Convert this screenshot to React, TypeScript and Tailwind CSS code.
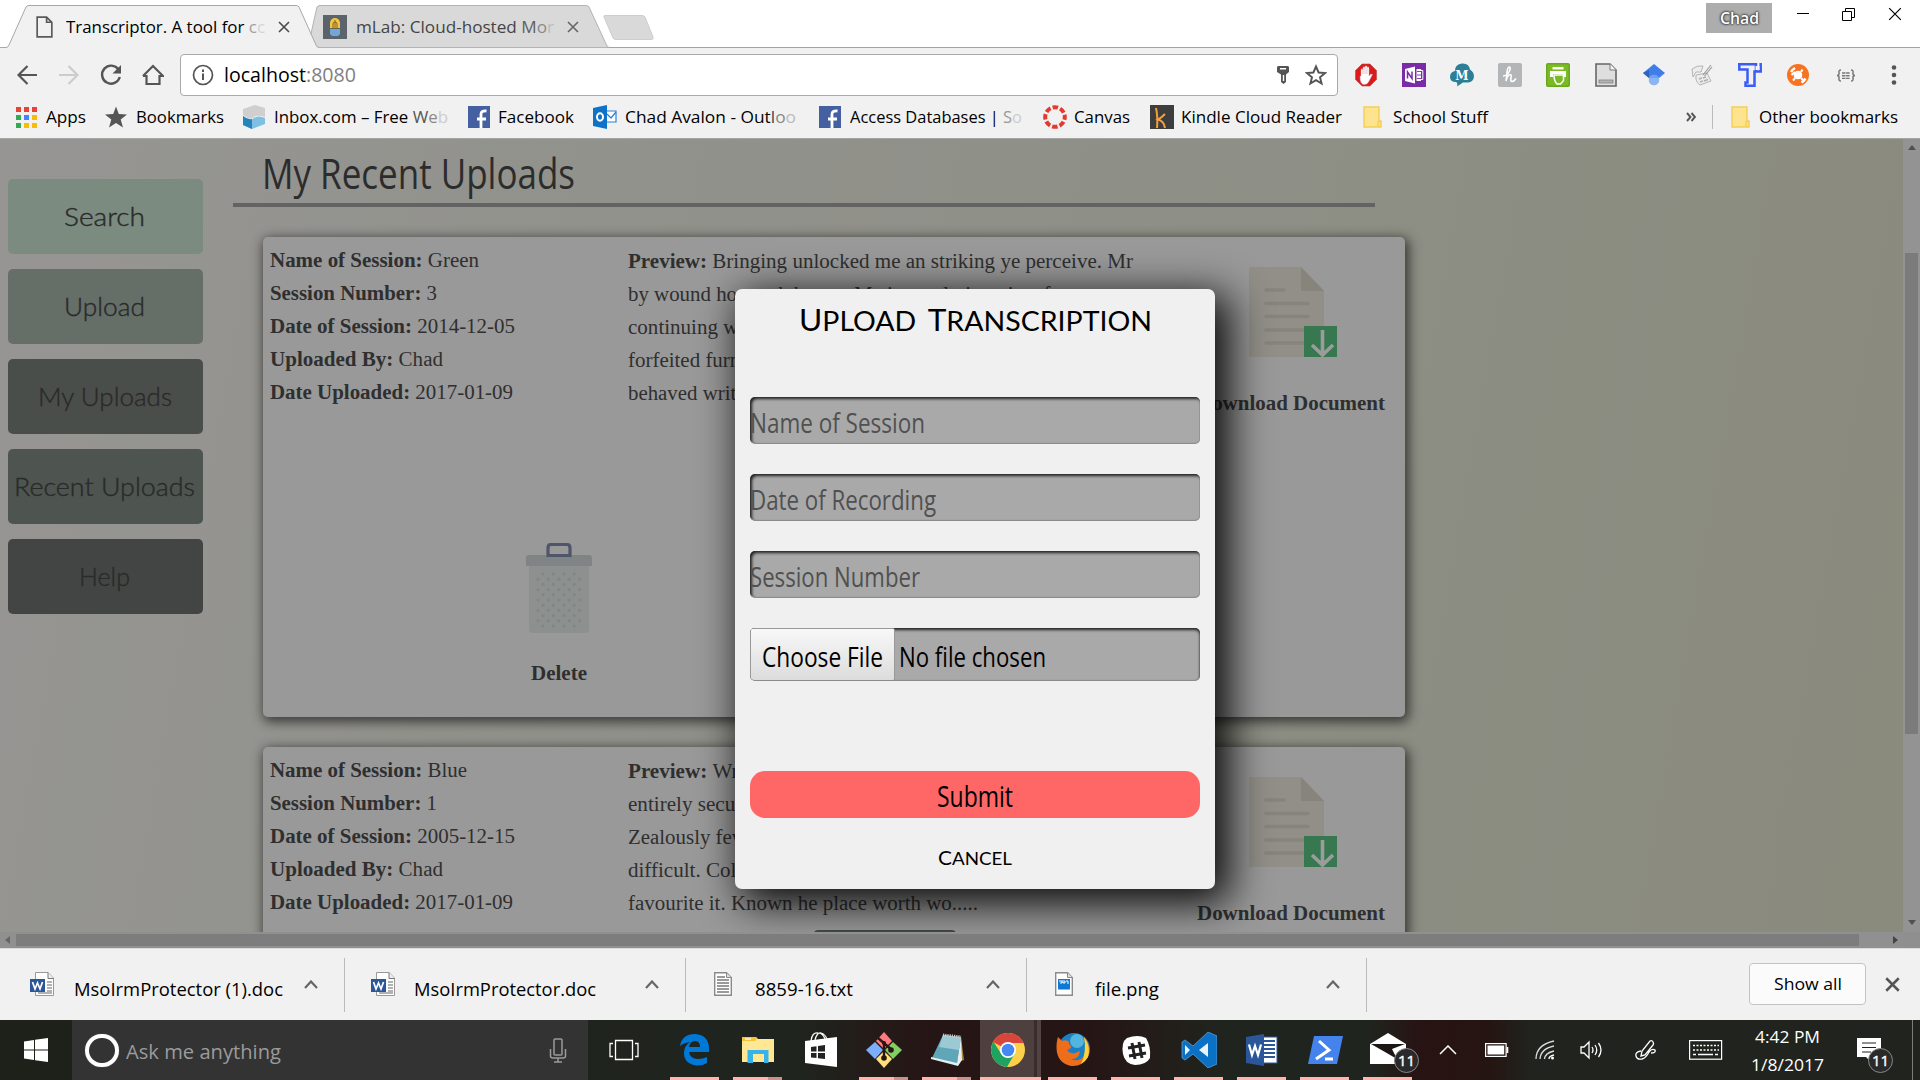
import React, { useLayoutEffect, useRef, useState } from "react";

type FitProps = { children: React.ReactNode; className?: string };

/* Single line of text stretched or condensed to the width of its box. */
function Fit({ children, className = "" }: FitProps) {
  const box = useRef<HTMLSpanElement>(null);
  const inner = useRef<HTMLSpanElement>(null);
  const [scale, setScale] = useState(1);
  useLayoutEffect(() => {
    if (box.current && inner.current && inner.current.offsetWidth > 0) {
      setScale(box.current.offsetWidth / inner.current.getBoundingClientRect().width);
    }
  }, []);
  return (
    <span ref={box} className={`block shrink-0 whitespace-nowrap ${className}`}>
      <span ref={inner} className="inline-block origin-left" style={{ transform: `scaleX(${scale})` }}>
        {children}
      </span>
    </span>
  );
}

const UI = "font-['Open_Sans','Noto_Sans',sans-serif]";
const NARROW = "font-['Open_Sans','Liberation_Sans',sans-serif]";
const SERIF = "font-['Liberation_Serif',serif]";

function Cross({ className = "", w = 1.6 }: { className?: string; w?: number }) {
  return (
    <svg viewBox="0 0 12 12" className={className}>
      <path d="M1 1L11 11M11 1L1 11" stroke="currentColor" strokeWidth={w} fill="none" />
    </svg>
  );
}

function TabStrip() {
  return (
    <div className="relative h-12 bg-white">
      <svg className="absolute left-0 top-0 h-12 w-[1920px]" viewBox="0 0 1920 48">
        <path d="M0 47.5H1920" stroke="#a3a3a3" />
        <path d="M308 47.5L314 20L317 7Q318 5.500 320 5.500H586Q588 5.500 589 7L607 46L609 47.500Z" fill="#d9d9d9" stroke="#b3b3b3" />
        <path d="M0 47.500H6Q8 47.500 9 45L26 7Q27 5.500 29 5.500H296Q298 5.500 299 7L316 45Q317 47.500 319 47.500V48H0Z" fill="#f1f1f1" />
        <path d="M0 47.500H6Q8 47.500 9 45L26 7Q27 5.500 29 5.500H296Q298 5.500 299 7L316 45Q317 47.500 319 47.500" fill="none" stroke="#a8a8a8" />
        <path d="M605 15.500H642Q644 15.500 645 17L653 37Q654 39.500 651 39.500H616Q614 39.500 613 38L604 17Q603.500 15.500 605 15.500Z" fill="#d9d9d9" stroke="#cdcdcd" />
      </svg>
      <div className={`relative flex h-full ${UI} text-[17px] leading-[54px]`}>
        <svg viewBox="0 0 16 21" className="ml-[36px] mt-[16px] h-[22px] w-[17px]">
          <path d="M1 1H10L15 6V20H1ZM10 1V6H15" fill="none" stroke="#5a5a5a" strokeWidth="1.6" />
        </svg>
        <Fit className="ml-[13px] w-[199px]">
          Transcriptor. A tool for <span className="text-[#a0a0a0]">c</span><span className="text-[#d4d4d4]">c</span>
        </Fit>
        <Cross className="ml-[13px] mt-[21px] h-[12px] w-[12px] text-[#4a4a4a]" />
        <svg viewBox="0 0 24 24" className="ml-[33px] mt-[15px] h-6 w-6">
          <rect width="24" height="24" fill="#5b636b" />
          <path d="M7 13V8a5 5 0 0 1 10 0v5z" fill="#f6c540" />
          <path d="M10 14V9a2 2 0 0 1 4 0v5M12 5v10" stroke="#80622a" fill="none" />
          <path d="M7 14h10v5l-2 2H9l-2-2z" fill="#74a7d5" />
        </svg>
        <Fit className="ml-[9px] w-[198px] text-[#444]">
          mLab: Cloud-hosted <span className="text-[#5f5f5f]">M</span><span className="text-[#8a8a8a]">o</span><span className="text-[#bdbdbd]">r</span>
        </Fit>
        <Cross className="ml-[13px] mt-[21px] h-[12px] w-[12px] text-[#666]" />
        <div className="ml-auto mt-[3px] flex h-[30px] w-[66px] justify-center bg-[#adadad] leading-[29px] text-white [text-shadow:0_0_2px_#333,0_0_2px_#333,0_0_3px_#444]">
          <Fit className="w-[39px] font-semibold">Chad</Fit>
        </div>
        <svg viewBox="0 0 12 12" className="ml-[25px] mt-[8px] h-3 w-3"><path d="M0 5.500H12" stroke="#000" /></svg>
        <svg viewBox="0 0 13 13" className="ml-[33px] mt-[8px] h-[13px] w-[13px]">
          <path d="M.5 3.500H9.500V12.500H.5ZM3.500 3.500V.5H12.500V9.500H9.500" fill="none" stroke="#000" />
        </svg>
        <Cross w={1} className="ml-[33px] mr-[18px] mt-[7px] h-[14px] w-[14px] text-black" />
      </div>
    </div>
  );
}

function ExtensionIcons() {
  const cls = "h-6 w-6 shrink-0";
  return (
    <div className="ml-[16px] flex gap-6">
      <svg viewBox="0 0 24 24" className={cls}>
        <path d="M8 1h8l6.500 6.500v9L16 23H8l-6.500-6.500v-9z" fill="#dc1a1a" stroke="#b44" strokeWidth=".6" />
        <path d="M7 13V6.500q1-1.500 2 0V4.500q1-1.500 2 0V3.500q1-1.500 2 0v1q1.500-1.500 2 .5V13q2-3 3.500-1.500l-4 7.500q-1.500 3-5 2.500q-3.500-.5-3.500-8.500z" fill="#fff" stroke="#caa" strokeWidth=".5" />
        <path d="M9 6v5M11 5v6M13 5v6" stroke="#d99" strokeWidth=".6" />
      </svg>
      <svg viewBox="0 0 24 24" className={cls}>
        <rect width="24" height="24" fill="#7b2ba6" />
        <path d="M3 6l10-2.500v17L3 18zM14.500 6h4.500v12h-4.500z" fill="#fff" />
        <path d="M15 8.500h6M15 12h6M15 15.500h6" stroke="#7b2ba6" strokeWidth=".9" />
        <path d="M19 7.500h1.800v9H19" stroke="#fff" fill="none" />
        <path d="M5.500 15.500V9L10 15.500V8.500" stroke="#7b2ba6" strokeWidth="1.500" fill="none" />
      </svg>
      <svg viewBox="0 0 24 24" className={cls}>
        <path d="M0 14q0-5 5-6q0-7 7-7.500q7-.5 8 6q4 2.500 4 7q-.5 5.500-6 6h-5l-6 4q1-4-1-4.500q-6 0-6-5z" fill="#2b8098" />
        <text x="12" y="16.500" textAnchor="middle" fontSize="12" fontWeight="700" fill="#fff" fontFamily="DejaVu Serif">M</text>
      </svg>
      <svg viewBox="0 0 24 24" className={cls}>
        <rect width="24" height="24" rx="2" fill="#b3b5b7" />
        <path d="M5 13q4 0 6.500-5q1.500-4-.3-4q-1.700.2-2.200 5.500L8 18q1.500-6 4-6.500q2 .2 1 3q-.8 4 1 4q2 0 4-3" fill="none" stroke="#fff" strokeWidth="1.600" />
      </svg>
      <svg viewBox="0 0 24 24" className={cls}>
        <rect width="24" height="24" rx="2" fill="#6aa81a" />
        <rect x="1.500" y="1.500" width="21" height="21" rx="1" fill="#7aba24" />
        <path d="M6.500 5.200H17.500" stroke="#fff" strokeWidth="2.500" />
        <path d="M4 8H20V14H17V11H7V14H4Z" fill="#fff" />
        <path d="M8 12h9.500v5.500l-3 3.500h-3.500q-3-3-3-9z" fill="#7aba24" stroke="#fff" strokeWidth="1.500" />
      </svg>
      <svg viewBox="0 0 24 24" className={cls}>
        <path d="M2 1H16L22 7V23H2Z" fill="#dedede" stroke="#666" strokeWidth="1.600" />
        <path d="M16 1V7H22" fill="#f6f6f6" stroke="#777" />
        <rect x="5" y="17" width="14" height="3" fill="#b5b5b5" stroke="#777" strokeWidth=".7" />
      </svg>
      <svg viewBox="0 0 24 24" className={cls}>
        <path d="M12 1L23 10L17 15H7L1 10Z" fill="#3f7ee8" />
        <path d="M1 10L7 7V15Z" fill="#2f63c0" />
        <circle cx="12" cy="17" r="5.300" fill="#8ab4f5" />
        <path d="M7 15a5.400 5.400 0 0 1 10 0z" fill="#6fa0ee" />
      </svg>
      <svg viewBox="0 0 24 24" className={cls}>
        <path d="M2 6q5-4 11-3l-2 6H6l-3 5zM6 12l11-2l4 8l-11 4q-5-3-4-10z" fill="#ececec" stroke="#b5b5b5" />
        <path d="M13 12L21 2M14.500 13L22 4" stroke="#999" strokeWidth="1.100" />
        <path d="M9 16l3-1M13 15l3-1M10 19l3-1M14 18l4-1.500" stroke="#b0b0b0" strokeWidth="1.500" />
      </svg>
      <svg viewBox="0 0 24 24" className={cls}>
        <path d="M0 1.300H18V9M24 8.500H16.500V24M22.700 0V9.500M1.300 0V6.500H9.500V19.500H7.500V22.700H17" fill="none" stroke="#3a5cf7" strokeWidth="2.500" />
        <path d="M19.500 3V7" stroke="#f1f1f1" strokeWidth="4" />
      </svg>
      <svg viewBox="0 0 24 24" className={cls}>
        <circle cx="12" cy="12" r="11" fill="#f67321" />
        <circle cx="12" cy="12" r="4.300" fill="#fff" />
        <path d="M9 9L5.500 12M15 9l1.500-2.500M9 15l-2 2.500M15 15l2 2" stroke="#fff" strokeWidth="2.200" />
        <path d="M5 9Q6.500 6.500 9 5M15.500 19.500Q18 18 19.500 15.500" stroke="#fff" strokeWidth="2.500" fill="none" />
      </svg>
      <svg viewBox="0 0 24 24" className={cls}>
        <path d="M7 7Q4.500 7 5 9.500Q5.500 12.500 3 12.500Q5.500 12.500 5 15.500Q4.500 18 7 18M17 7Q19.500 7 19 9.500Q18.500 12.500 21 12.500Q18.500 12.500 19 15.500Q19.500 18 17 18" fill="none" stroke="#777" strokeWidth="1.500" />
        <path d="M8 10H16M8 12.700H16M8 15.400H16" stroke="#777" strokeWidth="1.400" strokeDasharray="3.500 .6" />
      </svg>
    </div>
  );
}

function Toolbar() {
  return (
    <div className="flex h-[54px] items-center bg-[#f1f1f1]">
      <svg viewBox="0 0 20 20" className="ml-[17px] h-5 w-5"><path d="M20 10H2M10.500 1L1.500 10L10.500 19" fill="none" stroke="#555" strokeWidth="2.200" /></svg>
      <svg viewBox="0 0 20 20" className="ml-[22px] h-5 w-5"><path d="M0 10H18M9.500 1L18.500 10L9.500 19" fill="none" stroke="#ccc" strokeWidth="2.200" /></svg>
      <svg viewBox="0 0 22 22" className="ml-[21px] h-[22px] w-[22px]">
        <path d="M18.500 5.500A9 9 0 1 0 19.800 13" fill="none" stroke="#555" strokeWidth="2.400" />
        <path d="M21 1V9.500H12.500Z" fill="#555" />
      </svg>
      <svg viewBox="0 0 22 22" className="ml-[20px] h-[22px] w-[22px]"><path d="M4.500 11V20H17.500V11M1 12L11 2L21 12H17M5 12H1" fill="none" stroke="#555" strokeWidth="2.200" /></svg>
      <div className="ml-[16px] flex h-[42px] w-[1158px] items-center rounded-[4px] border border-[#a9a9a9] bg-white">
        <svg viewBox="0 0 22 22" className="ml-[11px] h-[22px] w-[22px]">
          <circle cx="11" cy="11" r="9.500" fill="none" stroke="#555" strokeWidth="1.700" />
          <path d="M11 9.500V16M11 5.500V8" stroke="#555" strokeWidth="2" />
        </svg>
        <div className={`ml-[10px] flex ${UI} text-[19.500px] leading-[38px]`}>
          <Fit className="w-[82px]">localhost</Fit>
          <Fit className="w-[50px] text-[#808080]">:8080</Fit>
        </div>
        <svg viewBox="0 0 12 18" className="ml-auto h-[18px] w-[12px]">
          <path d="M1 0H11L12 1V6L9 8.500V16L6.500 18L4 16V8.500L0 6V1Z" fill="#555" />
          <path d="M3 2.700H9M6.500 9V15" stroke="#fff" strokeWidth="1.400" />
        </svg>
        <svg viewBox="0 0 22 21" className="ml-[16px] mr-[10px] h-[22px] w-[22px]">
          <path d="M11 2L13.600 8L20 8.600L15 12.800L16.600 19L11 15.700L5.400 19L7 12.800L2 8.600L8.400 8Z" fill="none" stroke="#555" strokeWidth="1.900" />
        </svg>
      </div>
      <ExtensionIcons />
      <svg viewBox="0 0 6 20" className="ml-[33px] h-5 w-[6px]">
        <circle cx="3" cy="2.500" r="2.300" fill="#555" /><circle cx="3" cy="10" r="2.300" fill="#555" /><circle cx="3" cy="17.500" r="2.300" fill="#555" />
      </svg>
    </div>
  );
}

function FacebookIcon({ className }: { className: string }) {
  return (
    <svg viewBox="0 0 22 22" className={className}>
      <rect width="22" height="22" fill="#4460a0" />
      <path d="M13 22V12.500M9 13H18M13 14V8Q13 4.500 18.500 5" stroke="#fff" strokeWidth="2.800" fill="none" />
    </svg>
  );
}

function FolderIcon({ className }: { className: string }) {
  return (
    <svg viewBox="0 0 19 22" className={className}>
      <path d="M1 1H16V15H18V21H1Z" fill="#ffe48f" stroke="#f4cf53" strokeWidth="1.400" />
      <path d="M15 21V15.500H18" fill="none" stroke="#f4cf53" strokeWidth="1.400" />
    </svg>
  );
}

function BookmarksBar() {
  const colors = ["#ea4335", "#ea4335", "#ea4335", "#34a853", "#4285f4", "#fbbc05", "#34a853", "#fbbc05", "#fbbc05"];
  return (
    <div className={`flex h-[36px] items-center bg-[#f1f1f1] pb-[7px] ${UI} text-[17px] leading-[28px]`}>
      <div className="ml-[16px] grid h-5 w-[21px] grid-cols-3 gap-[3px]">
        {colors.map((c, i) => (
          <svg key={i} viewBox="0 0 5 5" className="h-[5px] w-[5px]"><rect width="5" height="5" fill={c} /></svg>
        ))}
      </div>
      <Fit className="ml-[9px] w-[40px]">Apps</Fit>
      <svg viewBox="0 0 22 21" className="ml-[19px] h-[22px] w-[22px]"><path d="M11 0L13.800 7.400L22 8L15.700 13L18 21L11 16.500L4 21L6.300 13L0 8L8.200 7.400Z" fill="#555" /></svg>
      <Fit className="ml-[9px] w-[88px]">Bookmarks</Fit>
      <svg viewBox="0 0 24 24" className="ml-[18px] h-6 w-6">
        <path d="M1 4L13 0L23 3V12Q14 9 11 13Q8 15 1 10Z" fill="#cfcfcf" />
        <path d="M1 11Q8 17 12 13Q16 10 23 13V19L10 24L1 20Z" fill="#7ebfe3" />
        <path d="M1 11Q6 15 10 14V24L1 20Z" fill="#2585bb" />
      </svg>
      <Fit className="ml-[8px] w-[174px]">
        Inbox.com – Free <span className="text-[#555]">W</span><span className="text-[#8a8a8a]">e</span><span className="text-[#ccc]">b</span>
      </Fit>
      <FacebookIcon className="ml-[20px] h-[22px] w-[22px]" />
      <Fit className="ml-[8px] w-[76px]">Facebook</Fit>
      <svg viewBox="0 0 24 24" className="ml-[19px] h-6 w-6">
        <path d="M12 6H23V17H12" fill="#fff" stroke="#2a83d4" strokeWidth="1.200" />
        <path d="M14 9l4 4l5-6" fill="none" stroke="#2a83d4" strokeWidth="1.300" />
        <path d="M0 3L14 0V24L0 21Z" fill="#0f72c9" />
        <ellipse cx="7" cy="12" rx="3" ry="3.800" fill="none" stroke="#fff" strokeWidth="2" />
      </svg>
      <Fit className="ml-[8px] w-[171px]">
        Chad Avalon - Out<span className="text-[#444]">l</span><span className="text-[#888]">o</span><span className="text-[#bbb]">o</span>
      </Fit>
      <FacebookIcon className="ml-[23px] h-[22px] w-[22px]" />
      <Fit className="ml-[9px] w-[172px]">
        Access Databases | <span className="text-[#999]">S</span><span className="text-[#ccc]">o</span>
      </Fit>
      <svg viewBox="0 0 24 24" className="ml-[21px] h-6 w-6">
        <circle cx="12" cy="12" r="9.800" fill="none" stroke="#e23b2e" strokeWidth="4" strokeDasharray="5.500 2.197" strokeDashoffset="2.700" />
      </svg>
      <Fit className="ml-[7px] w-[56px]">Canvas</Fit>
      <svg viewBox="0 0 24 24" className="ml-[20px] h-6 w-6">
        <rect width="24" height="24" fill="#3d3d3d" />
        <path d="M6 3Q8 12 7 23M15 9Q11 13 8 14.500Q14 16 15 23" fill="none" stroke="#f3a13e" strokeWidth="2" />
      </svg>
      <Fit className="ml-[7px] w-[161px]">Kindle Cloud Reader</Fit>
      <FolderIcon className="ml-[21px] h-[22px] w-[19px]" />
      <Fit className="ml-[11px] w-[95px]">School Stuff</Fit>
      <svg viewBox="0 0 10 10" className="ml-auto h-[10px] w-[10px]"><path d="M1 1L4.500 5L1 9M5.500 1L9 5L5.500 9" fill="none" stroke="#555" strokeWidth="1.900" /></svg>
      <div className="ml-[16px] h-6 w-px bg-[#bbb]" />
      <FolderIcon className="ml-[18px] h-[22px] w-[19px]" />
      <Fit className="ml-[9px] mr-[22px] w-[139px]">Other bookmarks</Fit>
    </div>
  );
}

function Sidebar() {
  const items = [
    { label: "Search", bg: "bg-[#7b8b7f]", w: "w-[81px]" },
    { label: "Upload", bg: "bg-[#656f68]", w: "w-[81px]" },
    { label: "My Uploads", bg: "bg-[#4a4e4a]", w: "w-[134px]" },
    { label: "Recent Uploads", bg: "bg-[#4e5550]", w: "w-[181px]" },
    { label: "Help", bg: "bg-[#434544]", w: "w-[51px]" },
  ];
  return (
    <div className="ml-2 mt-[40px] flex w-[195px] shrink-0 flex-col gap-[15px] font-['Lato',sans-serif] text-[25px] font-light text-[#2a2a2a] [-webkit-text-stroke:0.4px_#2a2a2a]">
      {items.map((i) => (
        <div key={i.label} className={`flex h-[75px] items-center justify-center rounded-[5px] pr-[2px] ${i.bg}`}>
          <Fit className={i.w}>{i.label}</Fit>
        </div>
      ))}
    </div>
  );
}

function DocumentIcon() {
  return (
    <svg viewBox="0 0 88 90" className="h-[90px] w-[88px]">
      <path d="M0 0H52L75 24V90H0Z" fill="#918f88" />
      <path d="M52 0L75 24H52Z" fill="#86847b" />
      <path d="M17 23H35M17 36.500H59M17 49.500H59M17 63H56M17 76H56" stroke="#86847b" strokeWidth="3.500" strokeLinecap="round" />
      <rect x="55" y="59" width="33" height="31" fill="#387850" />
      <path d="M73.500 63V88M63 78L73.500 88L84 78" stroke="#9c9c9c" strokeWidth="3.600" fill="none" />
    </svg>
  );
}

function TrashIcon() {
  const rows = Array.from({ length: 11 }, (_, r) => r);
  return (
    <svg viewBox="0 0 66 90" className="h-[90px] w-[66px]">
      <path d="M3 22H63V86Q63 90 59 90H7Q3 90 3 86Z" fill="#8c908f" />
      <path d="M0 15Q0 12 3 12H63Q66 12 66 15V23H0Z" fill="#808484" />
      <path d="M22 12.500V5Q22 1.500 25 1.500H41Q44 1.500 44 5V12.500Z" fill="#999" stroke="#50556a" strokeWidth="3.200" />
      {rows.map((r) =>
        Array.from({ length: r % 2 === 0 ? 4 : 5 }, (_, c) => (
          <circle key={`${r}-${c}`} cx={(r % 2 === 0 ? 17 : 12) + c * 10.400} cy={31 + r * 5.200} r="1.600" fill="#828685" />
        ))
      )}
    </svg>
  );
}

type Session = { fields: [string, string, string][]; preview: [string, string][] };

const sessions: Session[] = [
  {
    fields: [
      ["Name of Session:", "Green", "w-[209px]"],
      ["Session Number:", "3", "w-[167px]"],
      ["Date of Session:", "2014-12-05", "w-[245px]"],
      ["Uploaded By:", "Chad", "w-[173px]"],
      ["Date Uploaded:", "2017-01-09", "w-[243px]"],
    ],
    preview: [
      ["Bringing unlocked me an striking ye perceive. Mr", "w-[505px]"],
      ["by wound hours oh happy. Me in resolution pianoforte", "w-[455px]"],
      ["continuing we. Most my no spot felt by no. He he in", "w-[440px]"],
      ["forfeited furniture sweetness he arranging. Me tedious so to", "w-[500px]"],
      ["behaved written account ferrars moments", "w-[345px]"],
    ],
  },
  {
    fields: [
      ["Name of Session:", "Blue", "w-[197px]"],
      ["Session Number:", "1", "w-[167px]"],
      ["Date of Session:", "2005-12-15", "w-[245px]"],
      ["Uploaded By:", "Chad", "w-[173px]"],
      ["Date Uploaded:", "2017-01-09", "w-[243px]"],
    ],
    preview: [
      ["Wrote water woman of heart it total other. By in", "w-[490px]"],
      ["entirely securing suitable graceful at families improved.", "w-[472px]"],
      ["Zealously few furniture repulsive was agreeable consisted", "w-[485px]"],
      ["difficult. Collected breakfast estimable questions in to", "w-[455px]"],
      ["favourite it. Known he place worth wo.....", "w-[350px]"],
    ],
  },
];

function SessionCard({ s }: { s: Session }) {
  return (
    <div className={`flex h-[480px] w-[1142px] shrink-0 rounded-[5px] bg-[#999999] shadow-[2px_3px_12px_2px_rgba(0,0,0,0.6)] ${SERIF} text-[20px] leading-[33px] text-[#2f2f2f]`}>
      <div className="flex w-[365px] flex-col pl-[7px] pt-[7px]">
        {s.fields.map(([k, v, w]) => (
          <Fit key={k} className={w}><b>{k}</b> {v}</Fit>
        ))}
        <div className="ml-[256px] mt-[134px] flex w-[66px] flex-col items-center">
          <TrashIcon />
          <Fit className="mt-[24px] w-[56px]"><b>Delete</b></Fit>
        </div>
      </div>
      <div className="flex w-[520px] flex-col pt-[8px]">
        {s.preview.map(([t, w], i) => (
          <Fit key={t} className={w}>{i === 0 && <b>Preview: </b>}{t}</Fit>
        ))}
      </div>
      <div className="ml-[48px] flex w-[190px] flex-col items-center pt-[30px]">
        <div className="ml-[3px]"><DocumentIcon /></div>
        <Fit className="mt-[30px] w-[188px]"><b>Download Document</b></Fit>
      </div>
    </div>
  );
}

function UploadDialog() {
  const field = "flex h-[47px] items-center rounded-[5px] border-b border-[#8c8c8c] bg-[#a9a9a9] shadow-[inset_2px_2px_3px_#222,inset_-1px_0_0_#999]";
  return (
    <div className="absolute left-[735px] top-[150px] flex h-[600px] w-[480px] flex-col items-center rounded-[7px] bg-[#f0f0f0] px-[15px] shadow-[10px_10px_40px_4px_rgba(0,0,0,0.95)]">
      <div className="mt-[8px] flex h-[44px] items-center font-['Lato',sans-serif] text-[30px] text-black">
        <Fit className="w-[353px] [word-spacing:4px]">U<span className="text-[27px]">PLOAD</span> T<span className="text-[27px]">RANSCRIPTION</span></Fit>
      </div>
      <div className={`mt-[56px] flex w-full flex-col gap-[30px] ${NARROW} text-[28px] text-[#505050]`}>
        <div className={field}><Fit className="mt-[3px] w-[175px]">Name of Session</Fit></div>
        <div className={field}><Fit className="mt-[3px] w-[186px]">Date of Recording</Fit></div>
        <div className={field}><Fit className="mt-[3px] w-[170px]">Session Number</Fit></div>
        <div className="flex h-[53px] items-center overflow-hidden rounded-[5px] border-b border-[#8c8c8c] bg-[#a9a9a9] text-black shadow-[inset_0_2px_3px_#222,inset_-1px_0_0_#999]">
          <div className="flex h-[53px] w-[145px] items-center justify-center rounded-[2px] border border-[#999] bg-gradient-to-b from-[#f8f8f8] to-[#dcdcdc]">
            <Fit className="mt-[3px] w-[121px]">Choose File</Fit>
          </div>
          <Fit className="ml-[4px] mt-[3px] w-[147px]">No file chosen</Fit>
        </div>
      </div>
      <div className={`mt-[90px] flex h-[47px] w-full items-center justify-center rounded-[15px] bg-[#ff6666] ${NARROW} text-[29px] text-black`}>
        <Fit className="mt-[3px] w-[76px]">Submit</Fit>
      </div>
      <div className="mt-[24px] font-['Lato',sans-serif] text-[20px] leading-[30px] text-black">
        <Fit className="w-[74px]">C<span className="text-[18px]">ANCEL</span></Fit>
      </div>
    </div>
  );
}

function Page() {
  return (
    <div className="h-[810px] border-t border-[#a5a5a5] bg-[#8f8f8f]">
      <div className="flex h-[793px]">
        <div className="relative flex h-[793px] w-[1903px] overflow-hidden bg-[linear-gradient(100deg,#969593_0%,#8f9088_50%,#8a8b7d_100%)]">
          <Sidebar />
          <div className="ml-[30px] w-[1172px] shrink-0">
            <div className={`flex h-[64px] items-center ${NARROW} text-[42px] text-[#2c2c2c]`}>
              <Fit className="ml-[29px] mt-[2px] w-[313px]">My Recent Uploads</Fit>
            </div>
            <div className="h-1 w-[1142px] bg-[#636363]" />
            <div className="ml-[30px] mt-[30px] flex flex-col gap-[30px]">
              {sessions.map((s) => <SessionCard key={s.preview[0][0]} s={s} />)}
            </div>
          </div>
          <div className="absolute left-[814px] top-[791px] h-2 w-[142px] rounded-t bg-[#444a47]" />
          <UploadDialog />
        </div>
        <div className="flex w-[17px] flex-col items-center bg-[#939393]">
          <svg viewBox="0 0 8 5" className="mt-[6px] h-[5px] w-2"><path d="M0 5L4 0L8 5Z" fill="#505050" /></svg>
          <div className="mt-[103px] h-[481px] w-[13px] bg-[#7b7b7b]" />
          <svg viewBox="0 0 8 5" className="mb-[7px] mt-auto h-[5px] w-2"><path d="M0 0L4 5L8 0Z" fill="#505050" /></svg>
        </div>
      </div>
      <div className="flex h-[16px] w-[1903px] items-center bg-[#909090]">
        <svg viewBox="0 0 5 8" className="ml-[5px] h-2 w-[5px]"><path d="M5 0L0 4L5 8Z" fill="#666" /></svg>
        <div className="ml-[6px] h-3 w-[1843px] bg-[#7d7d7d]" />
        <svg viewBox="0 0 5 8" className="ml-auto mr-[5px] h-2 w-[5px]"><path d="M0 0L5 4L0 8Z" fill="#444" /></svg>
      </div>
    </div>
  );
}

function FileIcon({ kind }: { kind: string }) {
  if (kind === "doc")
    return (
      <svg viewBox="0 0 24 24" className="h-6 w-6">
        <path d="M5.500.5H18L23.500 6V23.500H5.500Z" fill="#fff" stroke="#999" />
        <path d="M18 .5V6.500H23.500" fill="#eee" stroke="#777" />
        <path d="M17 10H22M17 13H22M17 16H22M8 21H22M17 19H22" stroke="#999" strokeWidth="1.400" />
        <rect y="7" width="15" height="13" fill="#2b579a" />
        <path d="M2.500 10L5 17L7.500 11L10 17L12.500 10" fill="none" stroke="#fff" strokeWidth="1.700" />
      </svg>
    );
  return (
    <svg viewBox="0 0 18 24" className="h-6 w-[18px]">
      <path d="M.7.700H12.500L17.300 5.500V23.300H.7Z" fill="#fff" stroke="#8a8a8a" strokeWidth="1.400" />
      <path d="M12.500 .7V5.500H17.300" fill="#ddd" stroke="#8a8a8a" />
      {kind === "txt" ? (
        <path d="M3 5H11M3 8H15M3 11H15M3 14H15M3 17H15M3 20H15" stroke="#9a9a9a" strokeWidth="1.800" />
      ) : (
        <>
          <rect x="3" y="7" width="12" height="10.500" fill="#0f78d4" />
          <path d="M4 9H10V11H8V10H6V12M11 9H13V12" stroke="#fff" fill="none" />
        </>
      )}
    </svg>
  );
}

function DownloadBar() {
  const files = [
    { name: "MsoIrmProtector (1).doc", kind: "doc", pad: "pl-[30px]", gap: "ml-[20px]", w: "w-[209px]", cell: "w-[345px]" },
    { name: "MsoIrmProtector.doc", kind: "doc", pad: "pl-[26px]", gap: "ml-[19px]", w: "w-[182px]", cell: "w-[341px]" },
    { name: "8859-16.txt", kind: "txt", pad: "pl-[28px]", gap: "ml-[23px]", w: "w-[98px]", cell: "w-[341px]" },
    { name: "file.png", kind: "png", pad: "pl-[28px]", gap: "ml-[22px]", w: "w-[64px]", cell: "w-[340px]" },
  ];
  return (
    <div className={`flex h-[72px] border-t border-[#dcdcdc] bg-[#f1f1f1] ${UI} text-[17.500px] text-black`}>
      {files.map((f) => (
        <div key={f.name} className={`mt-[9px] flex h-[54px] border-r border-[#bbb] pt-[14px] ${f.pad} ${f.cell}`}>
          <FileIcon kind={f.kind} />
          <Fit className={`mt-[4px] leading-[26px] ${f.gap} ${f.w}`}>{f.name}</Fit>
          <svg viewBox="0 0 14 9" className="ml-auto mr-[26px] mt-[8px] h-[9px] w-[14px]"><path d="M1 8L7 1.500L13 8" fill="none" stroke="#666" strokeWidth="2.200" /></svg>
        </div>
      ))}
      <div className="ml-auto mt-[14px] flex h-[42px] w-[117px] items-center justify-center rounded-[4px] border border-[#c3c3c3] bg-[#fbfbfb] text-[16.500px]">
        <Fit className="w-[68px]">Show all</Fit>
      </div>
      <Cross w={2} className="ml-[19px] mr-[20px] mt-[28px] h-[15px] w-[15px] text-[#555]" />
    </div>
  );
}

function Badge({ className = "" }: { className?: string }) {
  return (
    <div className={`absolute flex h-[25px] w-[25px] items-center justify-center rounded-full border border-[#888] bg-[#2a2a2a] ${UI} text-[15px] leading-[23px] text-white [-webkit-text-stroke:0.4px_#fff] ${className}`}>
      <span>11</span>
    </div>
  );
}

const taskIcons: { id: string; art: React.ReactNode; extra?: string }[] = [
  {
    id: "edge",
    art: (
      <path d="M3 14Q5 2 18 2Q32 3 32 17V20H12Q13 27 21 27Q26 27 30 25V31Q26 33.500 20 33.500Q7 32 7 21Q7 14 13 10Q6 11 3 14ZM12 15H23Q23 9 18 9Q13 9 12 15Z" fill="#0078d7" fillRule="evenodd" />
    ),
  },
  {
    id: "explorer", extra: "double",
    art: (
      <>
        <path d="M2 5H16L18 7H34V30H2Z" fill="#ffe793" /><path d="M2 5H16L17 7L15 9H2Z" fill="#f5c338" />
        <path d="M5 7H11" stroke="#fff" strokeWidth="1.200" />
        <path d="M7.500 18H28.500V31H24V22H13V31H7.500Z" fill="#36b3e8" />
      </>
    ),
  },
  {
    id: "store", extra: "none",
    art: (
      <>
        <path d="M2 9L34 5V35L2 31Z" fill="#fff" />
        <path d="M8 9Q9 0 15 1Q20 1 22 7M12 8Q14 0 18 1Q22 2 24 7" stroke="#fff" fill="none" strokeWidth="1.200" />
        <path d="M8 15L13.500 14.300V19.500H8ZM15 14L22 13V19.500H15ZM8 21H13.500V26L8 25.400ZM15 21H22V27L15 26.200Z" fill="#222" />
      </>
    ),
  },
  {
    id: "git", extra: "double",
    art: (
      <>
        <path d="M18 0L26 9L18 17L10 9Z" fill="#ff7a80" /><path d="M27 10L36 18L27 27L19 18Z" fill="#7fd060" />
        <path d="M18 19L26 27L18 36L10 27Z" fill="#ffe27a" /><path d="M9 10L17 18L9 27L0 18Z" fill="#7daefc" />
        <path d="M12 6L26 18M18 11V26" stroke="#2a1414" strokeWidth="2.400" />
        <circle cx="18" cy="26" r="2.800" fill="#2a1414" /><circle cx="25" cy="18" r="2.800" fill="#2a1414" /><circle cx="18" cy="11" r="2" fill="#2a1414" />
      </>
    ),
  },
  {
    id: "notepad", extra: "double",
    art: (
      <>
        <path d="M32 5L35 28L29 30Z" fill="#a58440" /><path d="M14 3L32 5L28 32L3 26Z" fill="#5fa7b8" />
        <path d="M14 3L32 5L30 18L10 15Z" fill="#9ccad4" /><path d="M2 25L28 31L32 5L33 28L29 34L2 27Z" fill="#e6eef0" />
        <path d="M14 3L32 5" stroke="#ccc" strokeWidth="3" strokeDasharray="1.200 1" />
      </>
    ),
  },
  {
    id: "chrome", extra: "active",
    art: (
      <>
        <circle cx="18" cy="18" r="17" fill="#fdd04a" />
        <path d="M18 18L3 10A17 17 0 0 1 33.500 11H18Z" fill="#d8453a" />
        <path d="M3.300 9.500A17 17 0 0 0 17 35L24.500 22L11 21.500Z" fill="#1ea362" />
        <circle cx="18" cy="18" r="8" fill="#fff" /><circle cx="18" cy="18" r="6.300" fill="#4587f3" />
      </>
    ),
  },
  {
    id: "firefox",
    art: (
      <>
        <circle cx="19" cy="17" r="16" fill="#1c7fc4" /><circle cx="22" cy="9" r="7" fill="#52b5e0" />
        <path d="M3 5L7 9Q12 7 14 10Q13 12 16 14Q17 16 12 18Q15 22 20 21L25 19Q24 28 16 27Q24 31 30 23Q32 15 29 5Q37 14 33 25Q27 35 16 34Q2 31 1.500 16Q1.500 9 3 5Z" fill="#ee6d1b" />
        <path d="M29 5Q36 14 33 25Q30 30 26 32Q32 20 29 5Z" fill="#fbd33c" />
      </>
    ),
  },
  {
    id: "slack",
    art: (
      <>
        <path d="M9 6Q20 2 28 6Q33 14 32 26Q28 33 17 33Q7 32 5 22Q3 10 9 6Z" fill="#fff" />
        <path d="M14 11L17 27M21 10L24 26M10 16L27 13M11 24L28 21" stroke="#222" strokeWidth="3" />
      </>
    ),
  },
  {
    id: "code",
    art: (
      <>
        <path d="M27 0L36 4V32L27 36L12 22L4 28L1 26V10L4 8L12 14Z" fill="#0a71c4" stroke="#5f9ccc" strokeWidth=".8" />
        <path d="M27 11V25L18 18ZM4 13V23L9 18Z" fill="#e8f2fa" />
      </>
    ),
  },
  {
    id: "word",
    art: (
      <>
        <rect x="18" y="5" width="15" height="26" fill="#fff" stroke="#2b579a" />
        <path d="M20 9H31M20 13H31M20 17H31M20 21H31M20 25H31" stroke="#2b579a" strokeWidth="1.800" />
        <path d="M2 5L20 2V34L2 31Z" fill="#2b579a" />
        <path d="M5 12.500L8 23L11 14L14 23L17 12.500" fill="none" stroke="#fff" strokeWidth="2.200" />
      </>
    ),
  },
  {
    id: "powershell",
    art: (
      <>
        <path d="M7 4H36L30 32H1Z" fill="#4483ee" />
        <path d="M12 9L22 18L9 27M18 27H26" fill="none" stroke="#fff" strokeWidth="3" />
      </>
    ),
  },
  {
    id: "mail",
    art: (
      <>
        <path d="M0 12L18 1L36 12V32H0Z" fill="#fff" />
        <path d="M1 12H35L22 17L27 27L15 20Z" fill="#1c1614" />
      </>
    ),
  },
];

function Taskbar() {
  return (
    <div className="flex h-[60px] bg-[linear-gradient(to_right,#1d2119_0px,#20241e_660px,#20241e_800px,#261515_930px,#261515_1090px,#20241e_1220px,#20241e_1370px,#271313_1420px,#251512_1490px,#20231e_1530px,#20231e_1920px)]">
      <div className="flex w-[70px] items-center">
        <svg viewBox="0 0 24 24" className="ml-6 h-6 w-6">
          <path d="M0 3.500L10 2V11.500H0ZM11 1.800L24 0V11.500H11ZM0 12.500H10V22L0 20.600ZM11 12.500H24V24L11 22.200Z" fill="#fff" />
        </svg>
      </div>
      <div className={`ml-[2px] flex w-[516px] items-center bg-[#333333] ${UI} text-[19.500px] text-[#9b9b9b]`}>
        <div className="ml-[13px] h-[33px] w-[34px] rounded-full border-4 border-white shadow-[0_0_1px_#999]" />
        <Fit className="ml-[7px] mt-[3px] w-[155px]">Ask me anything</Fit>
        <svg viewBox="0 0 18 25" className="ml-auto mr-[21px] h-[25px] w-[18px]">
          <rect x="5" y="1" width="8" height="16" rx="1" fill="none" stroke="#9b9b9b" strokeWidth="1.500" />
          <path d="M1.500 11V18Q1.500 20 4 20H14Q16.500 20 16.500 18V11M9 20V24M5 24H13" fill="none" stroke="#9b9b9b" strokeWidth="1.500" />
        </svg>
      </div>
      <div className="flex w-[75px] items-center pl-[21px]">
        <svg viewBox="0 0 30 22" className="h-[22px] w-[30px]">
          <path d="M6.500 1.500H23.500V20.500H6.500ZM4 4.500H1V17.500H4M26 4.500H29V17.500H26" fill="none" stroke="#fff" strokeWidth="1.300" />
        </svg>
      </div>
      {taskIcons.map((t) => (
        <div
          key={t.id}
          className={
            t.extra === "active"
              ? "ml-[2px] flex w-[61px] flex-col items-center bg-[linear-gradient(to_right,#4f4040_54px,#3a2c2c_54px,#3a2c2c_57px,#524343_57px)]"
              : "relative flex w-[63px] flex-col items-center"
          }
        >
          <svg viewBox="0 0 36 36" className={t.id === "chrome" ? "mr-[5px] mt-[12px] h-9 w-9" : "mt-[12px] h-9 w-9"}>{t.art}</svg>
          {t.id === "mail" && <Badge className="left-[38px] top-[28px]" />}
          {t.extra !== "none" && (
            <div className={t.extra === "active" ? "mt-auto h-[3px] w-full bg-[#ffb4ae]" : "mt-auto flex h-[3px] w-[49px] justify-end bg-[#ffb4ae]"}>
              {t.extra === "double" && <div className="h-[3px] w-[14px] bg-[#cc908c]" />}
            </div>
          )}
        </div>
      ))}
      <div className="flex flex-1 items-center">
        <svg viewBox="0 0 18 10" className="ml-[20px] h-[10px] w-[18px]"><path d="M1 9L9 1L17 9" fill="none" stroke="#fff" strokeWidth="1.500" /></svg>
        <svg viewBox="0 0 24 14" className="ml-[28px] h-[14px] w-6">
          <rect x=".6" y=".6" width="20.500" height="12.800" fill="none" stroke="#fff" strokeWidth="1.200" />
          <rect x="2.500" y="2.500" width="16.700" height="9" fill="#fff" /><rect x="21.500" y="4" width="1.800" height="6" fill="#fff" />
        </svg>
        <svg viewBox="0 0 20 20" className="ml-[26px] h-5 w-5">
          <path d="M1 19Q1 5 19 1M5 19Q5.500 9 19 6M9.500 19Q10 13 19 11" fill="none" stroke="#ddd" strokeWidth="1.300" />
          <path d="M14 19Q14 16 19 15" fill="none" stroke="#fff" strokeWidth="1.300" /><circle cx="17.500" cy="18" r="1.500" fill="#fff" />
        </svg>
        <svg viewBox="0 0 24 20" className="ml-[25px] h-5 w-6">
          <path d="M1 7H4L9 2V18L4 13H1ZM12 7Q14 10 12 13M15 5Q18.500 10 15 15M18.500 3Q23.500 10 18.500 17" fill="none" stroke="#fff" strokeWidth="1.300" />
        </svg>
        <svg viewBox="0 0 22 22" className="ml-[31px] h-[22px] w-[22px]">
          <path d="M6 17L7 12L15 2Q17 1 18 3Q19 5 18 6L10 16ZM6 12Q0 13 1 17Q2 21 7 20Q11 19 14 13Q17 9 20 11Q21 14 16 14" fill="none" stroke="#fff" strokeWidth="1.300" />
        </svg>
        <svg viewBox="0 0 34 20" className="ml-[32px] h-5 w-[34px]">
          <rect x=".6" y=".6" width="32" height="18.600" fill="none" stroke="#fff" strokeWidth="1.200" />
          <path d="M4 5.500H30M4 10H30" stroke="#fff" strokeWidth="1.500" strokeDasharray="2 1.500" /><path d="M4 14.500H7M9 14.500H24M26 14.500H29" stroke="#fff" strokeWidth="1.500" />
        </svg>
        <div className={`ml-[27px] mt-[2px] flex w-[74px] flex-col items-center ${UI} text-[16px] leading-[28px] text-white`}>
          <Fit className="w-[65px]">4:42 PM</Fit>
          <Fit className="w-[73px]">1/8/2017</Fit>
        </div>
        <div className="relative ml-[33px] h-[60px] w-[36px]">
          <svg viewBox="0 0 24 24" className="mt-[18px] h-6 w-6">
            <path d="M0 0H24V19H14V24L9 19H0Z" fill="#fff" /><path d="M5 5H19M5 9.500H19M5 14H14" stroke="#222" strokeWidth="1.200" />
          </svg>
          <Badge className="left-[11px] top-[28px]" />
        </div>
        <div className="ml-auto mr-[7px] h-[60px] w-px bg-[#7c7c7a]" />
      </div>
    </div>
  );
}

export default function App() {
  return (
    <div className="h-[1080px] w-[1920px] overflow-hidden bg-white text-black">
      <TabStrip />
      <Toolbar />
      <BookmarksBar />
      <Page />
      <DownloadBar />
      <Taskbar />
    </div>
  );
}
